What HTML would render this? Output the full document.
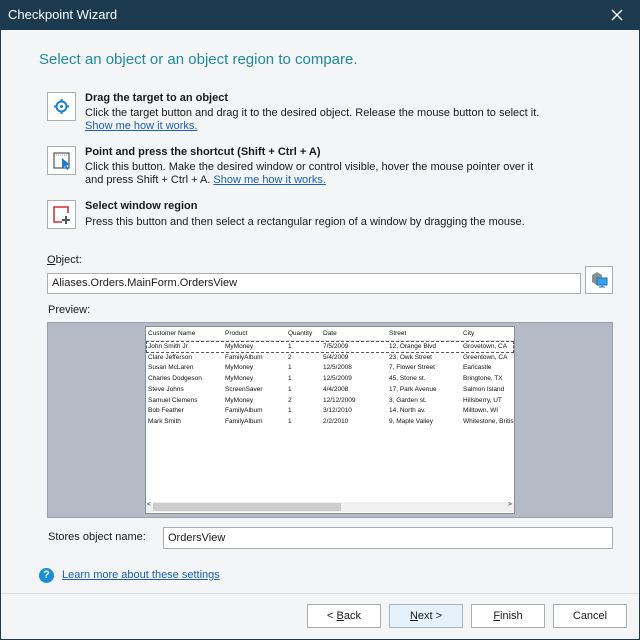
<!DOCTYPE html>
<html><head><meta charset="utf-8"><style>
*{box-sizing:border-box;margin:0;padding:0}
body{width:640px;height:640px;overflow:hidden;background:#f3f5f7;font-family:"Liberation Sans",sans-serif;font-size:11px;color:#1a1a1a;position:relative}
.a{position:absolute;white-space:nowrap}
.win{position:absolute;left:0;top:0;width:640px;height:640px;border:1px solid #1b3a4f;border-top:none}
.tb{position:absolute;left:0;top:0;width:640px;height:30px;background:#1b3a4f;color:#fff}
.ib{position:absolute;left:47px;width:29px;height:29px;border:1px solid #a9aeb5;background:#fff}
a,.lk{color:#1a5fb4;text-decoration:underline}
.inp{position:absolute;background:#fff;border:1px solid #a9aeb5;padding-left:4px;line-height:19px;font-size:11px}
.btn{position:absolute;top:604px;width:74px;height:24px;border:1px solid #adadad;background:#fff;text-align:center;line-height:22px;font-size:11px}
.t{position:absolute;font-size:6.5px;line-height:10.7px;white-space:nowrap;color:#111}
</style></head><body>
<div class="tb"><span class="a" style="left:8px;top:7px;font-size:13px">Checkpoint Wizard</span>
<svg class="a" style="left:611px;top:9px" width="12" height="12"><path d="M1 1L11 11M11 1L1 11" stroke="#fff" stroke-width="1.4"/></svg></div>
<div class="win"></div>
<div class="a" style="left:39px;top:51px;font-size:15px;color:#1f8a9c">Select an object or an object region to compare.</div>

<div class="ib" style="top:92px"><svg width="27" height="27"><circle cx="13.5" cy="13.5" r="5" fill="none" stroke="#1a7fd4" stroke-width="2"/><circle cx="13.5" cy="13.5" r="1.5" fill="#1a7fd4"/><path d="M13.5 6v3M13.5 18v3M6 13.5h3M18 13.5h3" stroke="#1a7fd4" stroke-width="2"/></svg></div>
<div class="a" style="left:85px;top:92px;font-weight:bold">Drag the target to an object</div>
<div class="a" style="left:85px;top:107px">Click the target button and drag it to the desired object. Release the mouse button to select it.</div>
<div class="a lk" style="left:85px;top:120px">Show me how it works.</div>

<div class="ib" style="top:146px"><svg width="27" height="27"><rect x="6" y="6" width="15" height="15" fill="none" stroke="#333" stroke-width="1"/><path d="M6 8h15" stroke="#999" stroke-dasharray="1 1"/><path d="M14 11v11l3-3 2 4 1.5-.7-2-4h4z" fill="#1a7fd4"/></svg></div>
<div class="a" style="left:85px;top:146px;font-weight:bold">Point and press the shortcut (Shift + Ctrl + A)</div>
<div class="a" style="left:85px;top:161px">Click this button. Make the desired window or control visible, hover the mouse pointer over it</div>
<div class="a" style="left:85px;top:174px">and press Shift + Ctrl + A. <span class="lk">Show me how it works.</span></div>

<div class="ib" style="top:200px"><svg width="27" height="27"><path d="M20 12V6H6v15h8" fill="none" stroke="#d42a3a" stroke-width="1.5"/><path d="M18 15v8M14 19h8" stroke="#555" stroke-width="2"/></svg></div>
<div class="a" style="left:85px;top:200px;font-weight:bold">Select window region</div>
<div class="a" style="left:85px;top:216px">Press this button and then select a rectangular region of a window by dragging the mouse.</div>

<div class="a" style="left:47px;top:254px"><u>O</u>bject:</div>
<div class="inp" style="left:47px;top:273px;width:534px;height:21px">Aliases.Orders.MainForm.OrdersView</div>
<div class="a" style="left:585px;top:266px;width:28px;height:28px;border:1px solid #a9aeb5;background:#fff"><svg width="26" height="26"><path d="M6 8l5-3 5 3v7l-5 3-5-3z" fill="#8a8f96"/><rect x="11" y="11" width="10" height="7" fill="#3aa0e8" stroke="#1a6fb4"/><path d="M16 18v2M13 20h6" stroke="#1a6fb4"/></svg></div>

<div class="a" style="left:48px;top:304px">Preview:</div>
<div class="a" style="left:47px;top:322px;width:566px;height:196px;background:#b4bac6;border:1px solid #9aa1ad"></div>
<div class="a" style="left:145px;top:326px;width:370px;height:188px;background:#fff;border:1px solid #8a8f96"></div>
<div class="a" style="left:146px;top:327px;width:368px;height:14px;border-bottom:1px solid #e4e4e4"></div>
<div class="a" style="left:146px;top:341px;width:368px;height:12px;border:1px dashed #555"></div>
<div class="t" style="left:148px;top:329px">Customer Name</div><div class="t" style="left:225px;top:329px">Product</div><div class="t" style="left:288px;top:329px">Quantity</div><div class="t" style="left:323px;top:329px">Date</div><div class="t" style="left:389px;top:329px">Street</div><div class="t" style="left:463px;top:329px">City</div>
<div class="t" style="left:148px;top:342px">John Smith Jr<br>Clare Jefferson<br>Susan McLaren<br>Charles Dodgeson<br>Steve Johns<br>Samuel Clemens<br>Bob Feather<br>Mark Smith</div>
<div class="t" style="left:225px;top:342px">MyMoney<br>FamilyAlbum<br>MyMoney<br>MyMoney<br>ScreenSaver<br>MyMoney<br>FamilyAlbum<br>FamilyAlbum</div>
<div class="t" style="left:288px;top:342px">1<br>2<br>1<br>1<br>1<br>2<br>1<br>1</div>
<div class="t" style="left:323px;top:342px">7/5/2009<br>5/4/2009<br>12/5/2008<br>12/5/2009<br>4/4/2008<br>12/12/2009<br>3/12/2010<br>2/2/2010</div>
<div class="t" style="left:389px;top:342px">12, Orange Blvd<br>23, Owk Street<br>7, Flower Street<br>45, Stone st.<br>17, Park Avenue<br>3, Garden st.<br>14, North av.<br>9, Maple Valley</div>
<div class="t" style="left:463px;top:342px;width:51px;overflow:hidden">Grovetown, CA<br>Greentown, CA<br>Earlcastle<br>Bringtone, TX<br>Salmon Island<br>Hillsberry, UT<br>Milltown, WI<br>Whitestone, British</div>
<div class="a" style="left:146px;top:502px;width:368px;height:10px;background:#f0f0f0"></div>
<div class="a" style="left:153px;top:503px;width:188px;height:8px;background:#cdcdcd"></div>
<div class="t" style="left:147px;top:500px">&lt;</div><div class="t" style="left:508px;top:500px">&gt;</div>

<div class="a" style="left:48px;top:531px">Stores object name:</div>
<div class="inp" style="left:163px;top:527px;width:450px;height:22px;line-height:20px">OrdersView</div>

<div class="a" style="left:39px;top:568px;width:15px;height:15px;border-radius:50%;background:#1a8fd8;color:#fff;font-weight:bold;font-size:11px;text-align:center;line-height:15px">?</div>
<div class="a lk" style="left:62px;top:569px">Learn more about these settings</div>

<div class="a" style="left:1px;top:593px;width:638px;height:1px;background:#dcdfe3"></div>
<div class="btn" style="left:307px">&lt; <u>B</u>ack</div>
<div class="btn" style="left:389px;background:#e5f1fb;border-color:#9fb8cc"><u>N</u>ext &gt;</div>
<div class="btn" style="left:471px"><u>F</u>inish</div>
<div class="btn" style="left:553px">Cancel</div>
</body></html>
